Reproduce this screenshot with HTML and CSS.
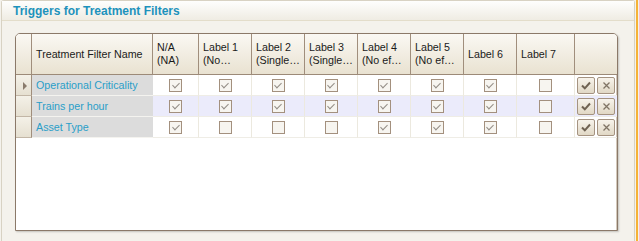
FILE: index.html
```html
<!DOCTYPE html>
<html lang="en">
<head>
<meta charset="UTF-8">
<title>Triggers for Treatment Filters</title>
<link rel="stylesheet" href="styles.css">
</head>
<body>

<div class="page">
<div class="panel">
<div class="panel-title">Triggers for Treatment Filters</div>

<div class="panel-body">
<div class="grid">
<table class="grid-table">
<thead>
<tr>
<th class="ind-col"></th>
<th class="name-col">Treatment Filter Name</th>
<th class="na-col">N/A<br>(NA)</th>
<th class="lbl-col">Label 1<br>(No…</th>
<th class="lbl-col">Label 2<br>(Single…</th>
<th class="lbl-col">Label 3<br>(Single…</th>
<th class="lbl-col">Label 4<br>(No ef…</th>
<th class="lbl-col">Label 5<br>(No ef…</th>
<th class="lbl-col">Label 6</th>
<th class="last-col">Label 7</th>
<th class="btn-col"></th>
</tr>
</thead>
<tbody>
<tr>
<td class="ind"><span class="arrow"></span></td>
<td class="name">Operational Criticality</td>
<td><span class="chk on"></span></td>
<td><span class="chk on"></span></td>
<td><span class="chk on"></span></td>
<td><span class="chk on"></span></td>
<td><span class="chk on"></span></td>
<td><span class="chk on"></span></td>
<td><span class="chk on"></span></td>
<td><span class="chk"></span></td>
<td class="btns"><span class="btn"><svg width="10" height="9" viewBox="0 0 10 9"><path d="M1 4.5 L3.8 7.3 L9 1.5" fill="none" stroke="#6f6252" stroke-width="2"/></svg></span><span class="btn"><svg width="9" height="9" viewBox="0 0 9 9"><path d="M1.5 1.5 L7.5 7.5 M7.5 1.5 L1.5 7.5" stroke="#807465" stroke-width="1.3"/></svg></span></td>
</tr>
<tr class="alt">
<td class="ind"></td>
<td class="name">Trains per hour</td>
<td><span class="chk on"></span></td>
<td><span class="chk on"></span></td>
<td><span class="chk on"></span></td>
<td><span class="chk on"></span></td>
<td><span class="chk on"></span></td>
<td><span class="chk on"></span></td>
<td><span class="chk on"></span></td>
<td><span class="chk"></span></td>
<td class="btns"><span class="btn"><svg width="10" height="9" viewBox="0 0 10 9"><path d="M1 4.5 L3.8 7.3 L9 1.5" fill="none" stroke="#6f6252" stroke-width="2"/></svg></span><span class="btn"><svg width="9" height="9" viewBox="0 0 9 9"><path d="M1.5 1.5 L7.5 7.5 M7.5 1.5 L1.5 7.5" stroke="#807465" stroke-width="1.3"/></svg></span></td>
</tr>
<tr>
<td class="ind"></td>
<td class="name">Asset Type</td>
<td><span class="chk on"></span></td>
<td><span class="chk"></span></td>
<td><span class="chk"></span></td>
<td><span class="chk"></span></td>
<td><span class="chk on"></span></td>
<td><span class="chk on"></span></td>
<td><span class="chk on"></span></td>
<td><span class="chk"></span></td>
<td class="btns"><span class="btn"><svg width="10" height="9" viewBox="0 0 10 9"><path d="M1 4.5 L3.8 7.3 L9 1.5" fill="none" stroke="#6f6252" stroke-width="2"/></svg></span><span class="btn"><svg width="9" height="9" viewBox="0 0 9 9"><path d="M1.5 1.5 L7.5 7.5 M7.5 1.5 L1.5 7.5" stroke="#807465" stroke-width="1.3"/></svg></span></td>
</tr>
</tbody>
</table>
</div>
</div>
</div>

<div class="edge"></div>
</div>

</body>
</html>
```

FILE: styles.css
```css
body {
margin: 0;
background-color: #f4f2ec;
font-family: "Liberation Sans", Arial, sans-serif;
height: 241px;
overflow: hidden;
}
.page {
display: flex;
height: 241px;
}
.panel {
margin-left: 1px;
width: 634px;
box-sizing: border-box;
border: 1px solid #d8d2c3;
border-bottom: none;
border-radius: 3px 3px 0 0;
background-color: #f4f2ec;
}
.panel-title {
height: 19px;
line-height: 21px;
padding-left: 11px;
border-bottom: 1px solid #e3ddca;
background: linear-gradient(#fefefd, #efece3);
font-size: 12px;
font-weight: bold;
color: #1d92bc;
}
.panel-body {
padding: 12px 0 0 13px;
}
.edge {
width: 2px;
margin-left: 1px;
background-color: #f6b236;
}

/* grid */
.grid {
width: 603px;
height: 198px;
box-sizing: border-box;
border: 1px solid #8b7969;
border-radius: 5px 5px 0 0;
background-color: #fff;
box-shadow: 1px 1px 2px rgba(0,0,0,0.2), inset -1px 0 0 #d3c8ba;
overflow: hidden;
}
.grid-table {
border-collapse: separate;
border-spacing: 0;
table-layout: fixed;
width: 601px;
font-size: 10.7px;
}
.grid-table thead tr {
height: 41px;
}
.grid-table th {
box-sizing: border-box;
padding: 0 4px;
background: linear-gradient(#faf8f3, #e9e2d1);
border-right: 1px solid #a08e7c;
border-bottom: 1px solid #9c8a78;
font-weight: normal;
color: #1a1a1a;
text-align: left;
line-height: 13px;
vertical-align: middle;
white-space: nowrap;
overflow: hidden;
}
.grid-table th.ind-col { width: 16px; padding: 0; }
.grid-table th.name-col { width: 121px; }
.grid-table th.na-col { width: 46px; }
.grid-table th.lbl-col { width: 53px; }
.grid-table th.last-col { width: 58px; }
.grid-table th.btn-col { width: 42px; border-right: none; }

.grid-table tbody tr {
height: 21px;
}
.grid-table td {
padding: 0;
border-right: 1px solid #ece9df;
border-bottom: 1px solid #efede6;
text-align: center;
vertical-align: middle;
}
.grid-table tr.alt td {
background-color: #ebebfb;
}
.grid-table td.ind,
.grid-table tr.alt td.ind {
background: linear-gradient(#f4f1e8, #e6e0d1);
border-right: 1px solid #a08e7c;
border-bottom: 1px solid #c2b6a6;
}
.grid-table td.name,
.grid-table tr.alt td.name {
background-color: #dcdcdc;
border-right: none;
border-bottom: 1px solid #f4f3ef;
padding-left: 4px;
text-align: left;
color: #2a9ec8;
white-space: nowrap;
}
.grid-table td.btns {
border-right: none;
padding-left: 2px;
text-align: left;
}

.arrow {
display: inline-block;
width: 0;
height: 0;
margin-left: 2px;
border-left: 4px solid #8a7b6c;
border-top: 4px solid transparent;
border-bottom: 4px solid transparent;
vertical-align: middle;
}

.chk {
display: inline-flex;
align-items: center;
justify-content: center;
width: 13px;
height: 13px;
box-sizing: border-box;
border: 1px solid #a3907e;
background-color: #f7f5f0;
vertical-align: middle;
}
.chk.on::after {
content: "";
width: 3px;
height: 6px;
margin-top: -2px;
border: solid #928c85;
border-width: 0 1px 1px 0;
transform: rotate(45deg);
}

.btn {
display: inline-flex;
align-items: center;
justify-content: center;
width: 18px;
height: 17px;
margin-right: 2px;
box-sizing: border-box;
border: 1px solid #a59381;
border-radius: 2px;
background: linear-gradient(#f7f3eb, #e1d8c5);
vertical-align: middle;
}
```
